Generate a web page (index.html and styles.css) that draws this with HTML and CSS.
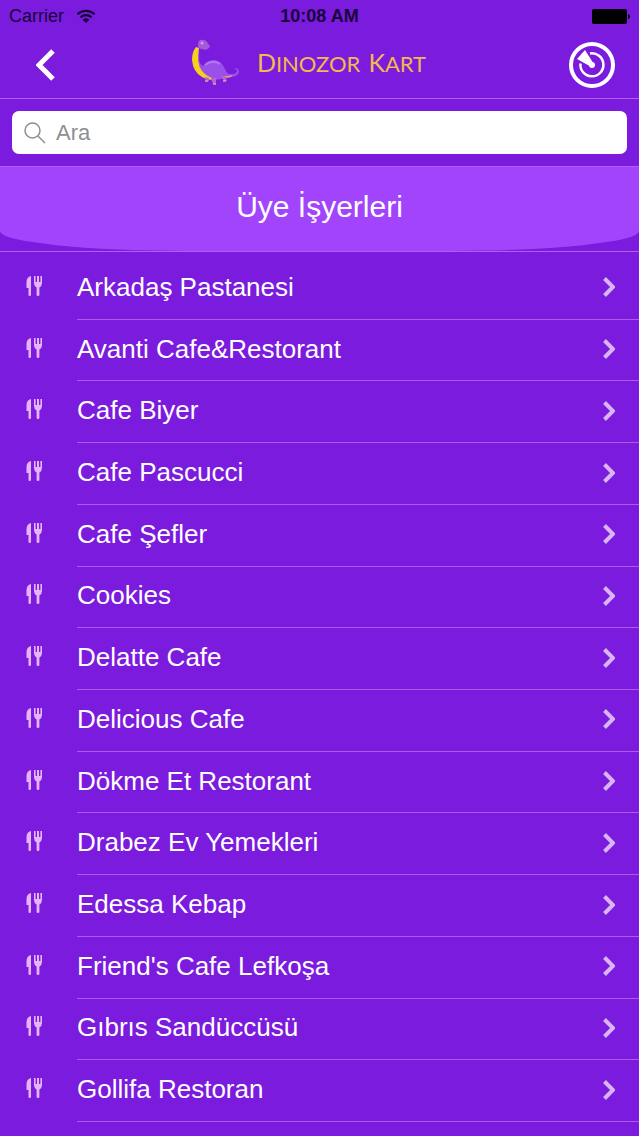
FILE: index.html
```html
<!DOCTYPE html>
<html lang="tr">
<head>
  <meta charset="UTF-8" />
  <title>Dinozor Kart</title>
  <meta name="viewport" content="width=device-width, initial-scale=1.0" />
  <link rel="stylesheet" href="styles.css">
</head>
<body>
  <svg class="sprite" aria-hidden="true">
    <symbol id="food" viewBox="0 0 17 20">
      <path d="M5 0v19q0 1-1.300 1T2.500 19v-7H.5V6Q.6 1 5 0z" />
      <path d="M8 0h1.600v6h1.400V0h2v6h1.400V0H16v7q0 3-2.600 4.500V19q0 1-1.400 1t-1.400-1v-7.500Q8 10 8 7z" />
    </symbol>
    <symbol id="chevron" viewBox="0 0 12 20">
      <path d="M1.500 1.500L10 10l-8.500 8.500" />
    </symbol>
  </svg>

  <div class="status">
    <div class="carrier">
      <span>Carrier</span>
      <svg width="20" height="15" viewBox="0 0 20 15">
        <path d="M1.500 5.300a12.500 12.500 0 0 1 17 0M4.500 8.400a8 8 0 0 1 11 0" fill="none" stroke="currentColor" stroke-width="2.200" />
        <path d="M6.700 10.700a5 5 0 0 1 6.600 0L10 14z" fill="currentColor" />
      </svg>
    </div>
    <div class="time">10:08 AM</div>
    <div class="battery">
      <svg width="38" height="15" viewBox="0 0 38 15">
        <rect x="0" y="0" width="35" height="15" rx="2" />
        <path d="M36 5q2 .5 2 2.500T36 10z" />
      </svg>
    </div>
  </div>

  <header class="navbar">
    <button type="button" class="back" aria-label="Geri">
      <svg width="20" height="32" viewBox="0 0 20 32"><path d="M17 2L3 16l14 14" /></svg>
    </button>
    <a href="#" class="logo" lang="en">
      <svg width="50" height="46" viewBox="0 0 50 46">
        <path d="M7 6Q7 0 12 1q4 0 5 4 3 1 1 4-3 3-7 1-4 0-4-4z" fill="#a35bdc" />
        <path d="M7 9q2 5 1 10 0 6 4 8 4-6 11-6 8 1 11 9 1 4 4 5 7 1 8-3 0-2-3-2 4-2 5 2 0 5-7 6l-11 2q-9 2-17-2Q5 33 5 22z" fill="#9c50ea" />
        <path d="M14 26q8-6 15-1" fill="none" stroke="#b275f2" stroke-width="2" />
        <path d="M5 8Q1 13 1 21q1 12 10 17 6 4 13 2-8-2-13-8Q5 24 8 9z" fill="#f7d01b" />
        <path d="M31 37q6 1 10-1l-1 2-7 1z" fill="#f0a860" />
        <path d="M14 38l1 4h3v-3zM20 39l2 6h3v-6zM30 37l3 5h3l-2-5z" fill="#b067d4" />
        <path d="M14 42h3M22 45h3M32 42h3" stroke="#e6a0a8" stroke-width="1.500" />
        <circle cx="11" cy="4" r="1.500" fill="#cc9ae8" />
      </svg>
      <span class="logo-text"><span>Dinozor</span> <span>Kart</span></span>
    </a>
    <button type="button" class="radar" aria-label="Yakınımdakiler">
      <svg width="46" height="46" viewBox="0 0 46 46">
        <circle cx="23" cy="23" r="21" fill="none" stroke="#fff" stroke-width="4" />
        <path d="M21 11.500a11.500 11.500 0 1 1-9.500 10" fill="none" stroke="#fff" stroke-width="2.500" />
        <path d="M16 8l8.500 13.500-3 3L8 17z" fill="#fff" />
        <circle cx="23" cy="23" r="3" fill="#fff" />
      </svg>
    </button>
  </header>

  <form class="search">
    <label class="search-box" for="search">
      <svg width="22" height="22" viewBox="0 0 22 22"><circle cx="8.500" cy="8.500" r="7.500" /><path d="M14 14l7 7" /></svg>
      <input type="text" id="search" placeholder="Ara" aria-label="Ara" />
    </label>
  </form>

  <div class="banner"><h1>Üye İşyerleri</h1></div>

  <ul class="places">
    <li><svg class="food"><use href="#food" /></svg><a href="#">Arkadaş Pastanesi<svg class="chevron"><use href="#chevron" /></svg></a></li>
    <li><svg class="food"><use href="#food" /></svg><a href="#">Avanti Cafe&amp;Restorant<svg class="chevron"><use href="#chevron" /></svg></a></li>
    <li><svg class="food"><use href="#food" /></svg><a href="#">Cafe Biyer<svg class="chevron"><use href="#chevron" /></svg></a></li>
    <li><svg class="food"><use href="#food" /></svg><a href="#">Cafe Pascucci<svg class="chevron"><use href="#chevron" /></svg></a></li>
    <li><svg class="food"><use href="#food" /></svg><a href="#">Cafe Şefler<svg class="chevron"><use href="#chevron" /></svg></a></li>
    <li><svg class="food"><use href="#food" /></svg><a href="#">Cookies<svg class="chevron"><use href="#chevron" /></svg></a></li>
    <li><svg class="food"><use href="#food" /></svg><a href="#">Delatte Cafe<svg class="chevron"><use href="#chevron" /></svg></a></li>
    <li><svg class="food"><use href="#food" /></svg><a href="#">Delicious Cafe<svg class="chevron"><use href="#chevron" /></svg></a></li>
    <li><svg class="food"><use href="#food" /></svg><a href="#">Dökme Et Restorant<svg class="chevron"><use href="#chevron" /></svg></a></li>
    <li><svg class="food"><use href="#food" /></svg><a href="#">Drabez Ev Yemekleri<svg class="chevron"><use href="#chevron" /></svg></a></li>
    <li><svg class="food"><use href="#food" /></svg><a href="#">Edessa Kebap<svg class="chevron"><use href="#chevron" /></svg></a></li>
    <li><svg class="food"><use href="#food" /></svg><a href="#">Friend's Cafe Lefkoşa<svg class="chevron"><use href="#chevron" /></svg></a></li>
    <li><svg class="food"><use href="#food" /></svg><a href="#">Gıbrıs Sandüccüsü<svg class="chevron"><use href="#chevron" /></svg></a></li>
    <li><svg class="food"><use href="#food" /></svg><a href="#">Gollifa Restoran<svg class="chevron"><use href="#chevron" /></svg></a></li>
  </ul>
</body>
</html>
```
FILE: styles.css
```css
* {
  box-sizing: border-box;
}

body {
  background-color: #7b1bde;
  color: #fff;
  font-family: "Liberation Sans", Arial, sans-serif;
  margin: 0;
  min-height: 100vh;
  display: flex;
  flex-direction: column;
}

svg {
  display: block;
  flex-shrink: 0;
}

a {
  color: inherit;
  text-decoration: none;
}

button {
  background: none;
  border: none;
  padding: 0;
  cursor: pointer;
}

.sprite {
  display: none;
}

.status {
  display: grid;
  grid-template-columns: 1fr auto 1fr;
  align-items: center;
  height: 32px;
  padding: 0 9px;
  color: #16033a;
  font-size: 18px;
}

.carrier {
  display: flex;
  align-items: center;
  gap: 12px;
}

.time {
  font-weight: bold;
  font-size: 18px;
}

.battery {
  justify-self: end;
  fill: #000;
}

.navbar {
  display: grid;
  grid-template-columns: 1fr auto 1fr;
  align-items: center;
  height: 67px;
  padding: 0 24px 0 36px;
  border-bottom: 1px solid #b35cf0;
}

.back {
  justify-self: start;
}

.back path {
  fill: none;
  stroke: #fff;
  stroke-width: 5;
}

.logo {
  display: flex;
  align-items: center;
  gap: 16px;
  padding: 0 34px 6px 0;
  color: #f2b94e;
  font-family: Lato, sans-serif;
  font-size: 22px;
}

.logo-text {
  display: flex;
  gap: 8px;
  text-transform: uppercase;
}

.logo-text span::first-letter {
  font-size: 25px;
}

.radar {
  justify-self: end;
}

.search {
  padding: 12px;
  border-bottom: 1px solid #b35cf0;
}

.search-box {
  display: flex;
  align-items: center;
  gap: 10px;
  height: 43px;
  padding: 0 12px;
  border-radius: 7px;
  background-color: #fff;
}

.search-box svg {
  fill: none;
  stroke: #8e8e93;
  stroke-width: 1.5;
}

.search-box input {
  flex: 1;
  min-width: 0;
  border: none;
  outline: none;
  padding: 0;
  background: none;
  color: #333;
  font-family: inherit;
  font-size: 22px;
}

.search-box input::placeholder {
  color: #8e8e93;
}

.banner {
  border-bottom: 1px solid #b35cf0;
}

.banner h1 {
  margin: 0;
  height: 84px;
  border-radius: 0 0 30% 30% / 0 0 20px 20px;
  background-color: #a244fc;
  font-size: 30px;
  font-weight: normal;
  line-height: 80px;
  text-align: center;
}

.places {
  flex: 1;
  display: flex;
  flex-direction: column;
  list-style: none;
  margin: 0;
  padding: 6px 0 14px;
}

.places li {
  flex: 1;
  display: flex;
  align-items: center;
  gap: 34px;
  min-height: 56px;
  padding-left: 26px;
}

.places a {
  flex: 1;
  align-self: stretch;
  display: flex;
  align-items: center;
  justify-content: space-between;
  padding: 0 24px 2px 0;
  border-bottom: 1px solid #ad59eb;
  font-size: 26px;
}

.food {
  width: 17px;
  height: 20px;
  margin-bottom: 6px;
  fill: #e6b5f8;
}

.chevron {
  width: 12px;
  height: 20px;
  fill: none;
  stroke: #d9b5f5;
  stroke-width: 4;
}
```
